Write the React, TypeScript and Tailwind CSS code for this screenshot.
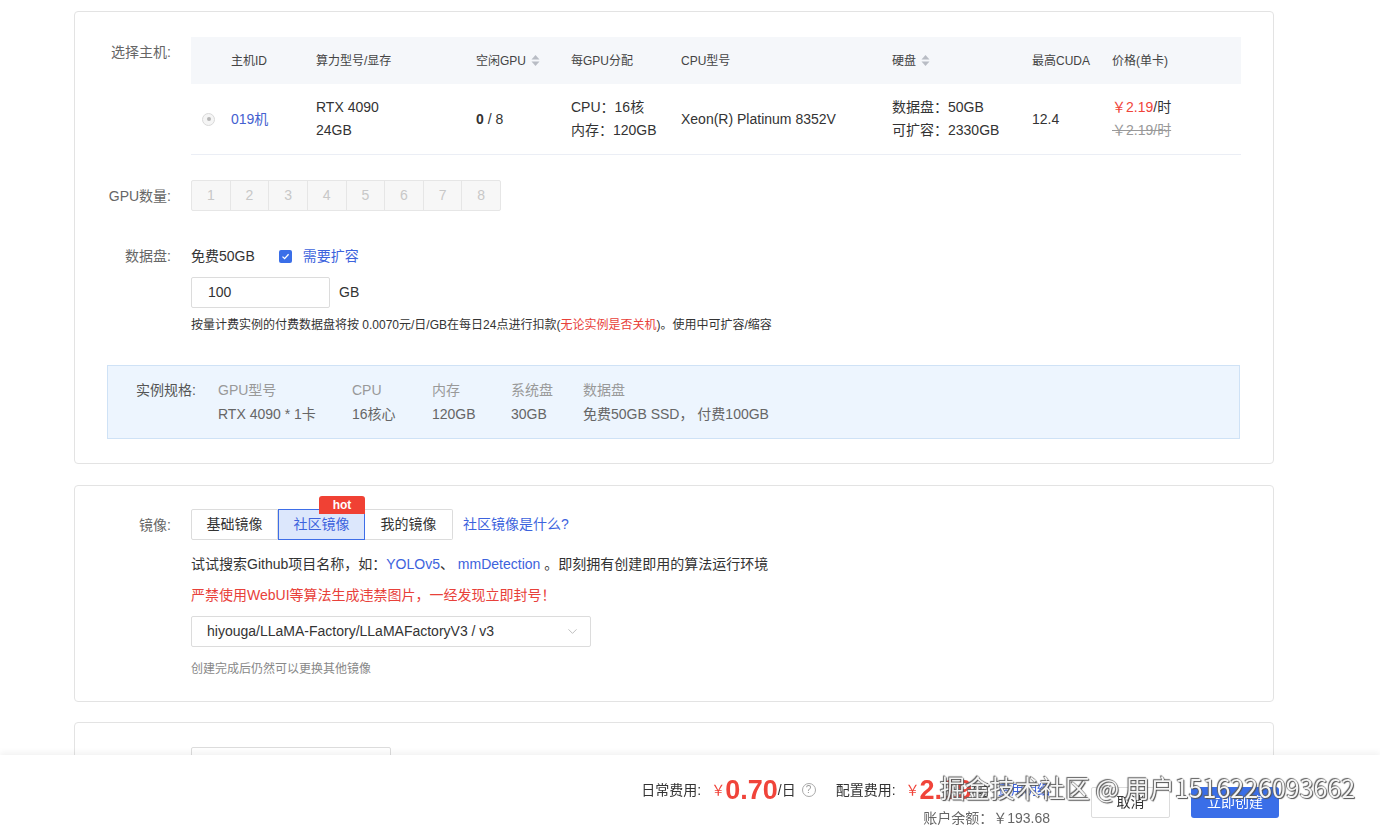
import { ChevronDown } from "lucide-react";

const FONT = "font-['Liberation_Sans','Noto_Sans_CJK_SC',sans-serif]";

function SortIcon() {
  return (
    <svg width="9" height="13" viewBox="0 0 9 13" className="ml-[5px] inline-block">
      <path d="M4.5 1 L8.5 5.5 L0.5 5.5 Z" fill="#b8bcc4" />
      <path d="M4.5 12 L8.5 7.5 L0.5 7.5 Z" fill="#b8bcc4" />
    </svg>
  );
}

function Label({ children, className = "" }: { children: React.ReactNode; className?: string }) {
  return (
    <div className={`w-[96px] shrink-0 text-right text-[14px] leading-[18px] text-[#666] ${className}`}>
      {children}
    </div>
  );
}

const COLS = "grid grid-cols-[40px_85px_160px_95px_110px_211px_140px_80px_1fr]";

function HostTable() {
  return (
    <div className="w-[1050px] text-[14px] text-[#333]">
      <div className={`${COLS} h-[47px] items-center bg-[#f5f7fa] text-[12px] text-[#444]`}>
        <div />
        <div>主机ID</div>
        <div>算力型号/显存</div>
        <div className="flex items-center">
          空闲GPU
          <SortIcon />
        </div>
        <div>每GPU分配</div>
        <div>CPU型号</div>
        <div className="flex items-center">
          硬盘
          <SortIcon />
        </div>
        <div>最高CUDA</div>
        <div>价格(单卡)</div>
      </div>
      <div className={`${COLS} h-[71px] items-center border-b border-[#ebeef5] leading-[23px]`}>
        <div className="pl-[11px]">
          <span className="flex h-[13px] w-[13px] items-center justify-center rounded-full border border-[#d9d9d9] bg-[#f5f5f5]">
            <span className="h-[4px] w-[4px] rounded-full bg-[#b5b5b5]" />
          </span>
        </div>
        <div className="text-[#4461d0]">019机</div>
        <div>
          <div>RTX 4090</div>
          <div>24GB</div>
        </div>
        <div>
          <span className="font-bold">0</span> / 8
        </div>
        <div>
          <div>CPU：16核</div>
          <div>内存：120GB</div>
        </div>
        <div>Xeon(R) Platinum 8352V</div>
        <div>
          <div>数据盘：50GB</div>
          <div>可扩容：2330GB</div>
        </div>
        <div>12.4</div>
        <div>
          <div>
            <span className="text-[#f0443a]">￥2.19</span>/时
          </div>
          <div className="text-[#999] line-through">￥2.19/时</div>
        </div>
      </div>
    </div>
  );
}

function GpuCount() {
  return (
    <div className="flex h-[31px] w-[310px] rounded-[2px] border border-[#e6e6e6] bg-[#f7f7f7]">
      {[1, 2, 3, 4, 5, 6, 7, 8].map((n) => (
        <div
          key={n}
          className="flex flex-1 items-center justify-center border-r border-[#e6e6e6] text-[14px] text-[#c8c8c8] last:border-r-0"
        >
          {n}
        </div>
      ))}
    </div>
  );
}

function SpecBox() {
  return (
    <div className="ml-[32px] h-[74px] w-[1133px] border border-[#cfe2f6] bg-[#edf5fe] pl-[28px] pt-[15px] text-[14px] leading-[18px]">
      <div className="grid grid-cols-[82px_134px_80px_79px_72px_1fr] gap-y-[6px]">
        <div className="text-[#555]">实例规格:</div>
        <div className="text-[#999]">GPU型号</div>
        <div className="text-[#999]">CPU</div>
        <div className="text-[#999]">内存</div>
        <div className="text-[#999]">系统盘</div>
        <div className="text-[#999]">数据盘</div>
        <div />
        <div className="text-[#666]">RTX 4090 * 1卡</div>
        <div className="text-[#666]">16核心</div>
        <div className="text-[#666]">120GB</div>
        <div className="text-[#666]">30GB</div>
        <div className="text-[#666]">免费50GB SSD， 付费100GB</div>
      </div>
    </div>
  );
}

function HostCard() {
  return (
    <div className="rounded-[4px] border border-[#e3e3e3] pb-[24px] pt-[25px]">
      <div className="flex">
        <Label className="mt-[6px]">选择主机:</Label>
        <div className="ml-[20px]">
          <HostTable />
        </div>
      </div>

      <div className="mt-[25px] flex items-center">
        <Label>GPU数量:</Label>
        <div className="ml-[20px]">
          <GpuCount />
        </div>
      </div>

      <div className="mt-[36px] flex items-center">
        <Label>数据盘:</Label>
        <div className="ml-[20px] flex items-center text-[14px] leading-[18px] text-[#333]">
          <span>免费50GB</span>
          <span className="ml-[24px] flex h-[13px] w-[13px] items-center justify-center rounded-[2px] bg-[#3a6ee8]">
            <svg width="9" height="9" viewBox="0 0 9 9">
              <path d="M1.5 4.6 L3.6 6.6 L7.6 2.2" stroke="white" strokeWidth="1.3" fill="none" />
            </svg>
          </span>
          <span className="ml-[11px] text-[#3d63dd]">需要扩容</span>
        </div>
      </div>

      <div className="ml-[116px] mt-[12px] flex items-center">
        <div className="flex h-[31px] w-[139px] items-center rounded-[2px] border border-[#dcdcdc] pl-[16px] text-[14px] text-[#333]">
          100
        </div>
        <span className="ml-[9px] text-[14px] text-[#333]">GB</span>
      </div>

      <div className="ml-[116px] mt-[9px] text-[12px] leading-[16px] text-[#333]">
        按量计费实例的付费数据盘将按 0.0070元/日/GB在每日24点进行扣款(
        <span className="text-[#e8413a]">无论实例是否关机</span>)。使用中可扩容/缩容
      </div>

      <div className="mt-[32px]">
        <SpecBox />
      </div>
    </div>
  );
}

function ImageCard() {
  return (
    <div className="mt-[21px] rounded-[4px] border border-[#e3e3e3] pb-[24px] pt-[23px]">
      <div className="flex items-center">
        <Label>镜像:</Label>
        <div className="ml-[20px] flex items-center text-[14px]">
          <div className="flex h-[31px]">
            <div className="flex w-[87px] items-center justify-center rounded-l-[2px] border border-[#dcdcdc] text-[#333]">
              基础镜像
            </div>
            <div className="relative flex w-[87px] items-center justify-center border border-[#3e6ee8] bg-[#dce7fc] text-[#3d63dd]">
              社区镜像
              <span className="absolute right-[-1px] top-[-14px] flex h-[18px] w-[46px] items-center justify-center rounded-t-[3px] bg-[#f04134] text-[12px] font-bold text-white">
                hot
              </span>
            </div>
            <div className="flex w-[88px] items-center justify-center rounded-r-[2px] border border-l-0 border-[#dcdcdc] text-[#333]">
              我的镜像
            </div>
          </div>
          <span className="ml-[10px] text-[#3d63dd]">社区镜像是什么?</span>
        </div>
      </div>

      <div className="ml-[116px] mt-[15px] text-[14px] leading-[18px] text-[#333]">
        试试搜索Github项目名称，如：<span className="text-[#3d63dd]">YOLOv5</span>、{" "}
        <span className="text-[#3d63dd]">mmDetection</span> 。即刻拥有创建即用的算法运行环境
      </div>

      <div className="ml-[116px] mt-[13px] text-[14px] leading-[18px] text-[#e8413a]">
        严禁使用WebUI等算法生成违禁图片，一经发现立即封号！
      </div>

      <div className="ml-[116px] mt-[12px] flex h-[31px] w-[400px] items-center justify-between rounded-[2px] border border-[#dcdcdc] pl-[15px] pr-[10px] text-[14px] text-[#333]">
        <span>hiyouga/LLaMA-Factory/LLaMAFactoryV3 / v3</span>
        <ChevronDown size={15} strokeWidth={1.3} color="#b0b0b0" />
      </div>

      <div className="ml-[116px] mt-[14px] text-[12px] leading-[16px] text-[#888]">
        创建完成后仍然可以更换其他镜像
      </div>
    </div>
  );
}

function VoucherCard() {
  return (
    <div className="mt-[20px] h-[200px] rounded-[4px] border border-[#e3e3e3] pt-[24px]">
      <div className="flex items-center">
        <Label>代金券:</Label>
        <div className="ml-[20px] flex h-[31px] w-[200px] items-center rounded-[2px] border border-[#dcdcdc] pl-[15px] text-[14px] text-[#bbb]">
          请选择
        </div>
      </div>
    </div>
  );
}

function BottomBar() {
  return (
    <div className="fixed bottom-0 left-0 right-0 h-[75px] bg-white shadow-[0_-3px_6px_rgba(0,0,0,0.05)]">
      <div className="flex justify-end pr-[101px]">
        <div className="mt-[20px] flex flex-col items-end">
          <div className="flex h-[30px] items-center text-[14px] text-[#333]">
            <span>日常费用:</span>
            <span className="ml-[10px] text-[14px] text-[#f0443a]">￥</span>
            <span className="text-[27px] font-bold leading-[30px] text-[#f0443a]">0.70</span>
            <span>/日</span>
            <span className="ml-[6px] flex h-[14px] w-[14px] items-center justify-center rounded-full border border-[#aaa] text-[10px] leading-none text-[#999]">
              ?
            </span>
            <span className="ml-[20px]">配置费用:</span>
            <span className="ml-[10px] text-[14px] text-[#f0443a]">￥</span>
            <span className="text-[27px] font-bold leading-[30px] text-[#f0443a]">2.19</span>
            <span>/时</span>
            <span className="ml-[8px] text-[13px] text-[#3d63dd]">费用明细</span>
          </div>
          <div className="mt-[5px] h-[16px] text-[14px] leading-[16px] text-[#666]">账户余额：￥193.68</div>
        </div>
        <div className="ml-[41px] mt-[32px] flex h-[31px] w-[79px] items-center justify-center rounded-[2px] border border-[#dcdcdc] text-[14px] text-[#333]">
          取消
        </div>
        <div className="ml-[21px] mt-[32px] flex h-[31px] w-[88px] items-center justify-center rounded-[3px] bg-[#3a6ee8] text-[14px] text-white">
          立即创建
        </div>
      </div>
      <div className="absolute left-[940px] top-[17px] whitespace-nowrap font-['Noto_Sans_CJK_SC',sans-serif] text-[25px] leading-[30px] text-[#f4f4f4] [text-shadow:0_0_1px_#444,1px_1px_1px_#555,-1px_-1px_1px_#666]">
        掘金技术社区 @ 用户1516226093662
      </div>
    </div>
  );
}

export default function App() {
  return (
    <div className={`relative h-[830px] w-full overflow-hidden bg-white ${FONT}`}>
      <div className="ml-[74px] w-[1200px] pt-[11px]">
        <HostCard />
        <ImageCard />
        <VoucherCard />
      </div>
      <BottomBar />
    </div>
  );
}
